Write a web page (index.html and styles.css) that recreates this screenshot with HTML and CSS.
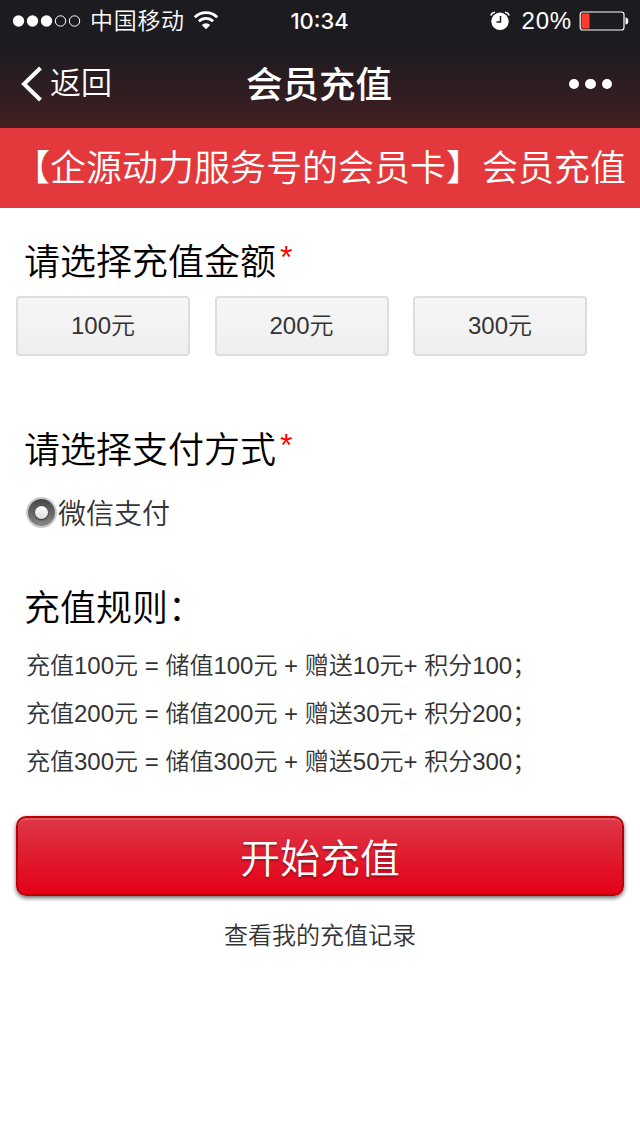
FILE: index.html
```html
<!DOCTYPE html>
<html lang="zh-CN">
<head>
    <meta charset="UTF-8">
    <meta name="viewport" content="width=device-width, initial-scale=1.0">
    <title>会员充值</title>
    <link rel="stylesheet" href="styles.css">
</head>
<body>
    <header class="top">
        <div class="status">
            <div class="status-left">
                <svg class="signal" width="70" height="14" viewBox="0 0 70 14">
                    <g fill="#fff">
                        <circle cx="6.5" cy="7" r="5.7"/>
                        <circle cx="20.5" cy="7" r="5.7"/>
                        <circle cx="34.5" cy="7" r="5.7"/>
                    </g>
                    <g fill="none" stroke="#fff">
                        <circle cx="48.5" cy="7" r="5.2"/>
                        <circle cx="62.5" cy="7" r="5.2"/>
                    </g>
                </svg>
                <span class="carrier">中国移动</span>
                <svg class="wifi" width="26" height="20" viewBox="0 0 26 20">
                    <g fill="none" stroke="#fff" stroke-width="2.8">
                        <path d="M1.8 6.2a15.8 15.8 0 0 1 22.4 0"/>
                        <path d="M5.9 10.3a10 10 0 0 1 14.2 0"/>
                    </g>
                    <path d="M8.8 14a6 6 0 0 1 8.4 0L13 18.2z" fill="#fff"/>
                </svg>
            </div>
            <div class="clock">10:34</div>
            <div class="status-right">
                <svg class="alarm" width="20" height="20" viewBox="0 0 20 20">
                    <circle cx="10" cy="10.3" r="8.7" fill="#fff"/>
                    <path d="M.9 4.5Q1.5 1.5 5 1.2M19.1 4.5Q18.5 1.5 15 1.2" fill="none" stroke="#fff" stroke-width="1.5"/>
                    <path d="M10.5 5v6H6.5" fill="none" stroke="#1c1b20" stroke-width="1.5"/>
                </svg>
                <span class="percent">20%</span>
                <svg class="battery" width="50" height="20" viewBox="0 0 50 20">
                    <rect x="1.2" y="1" width="43.8" height="18" rx="2.5" fill="none" stroke="#fff" stroke-width="1.2"/>
                    <rect x="2.5" y="2.5" width="8" height="15" fill="#ff3b30"/>
                    <path d="M46.5 6.5q2.8 0 2.8 3.5t-2.8 3.5z" fill="#fff"/>
                </svg>
            </div>
        </div>
        <nav class="nav">
            <a class="back">
                <svg width="22" height="36" viewBox="0 0 22 36">
                    <path d="M19.5 2L3 18l16.5 16" fill="none" stroke="#fff" stroke-width="4"/>
                </svg>
                <span>返回</span>
            </a>
            <h1 class="title">会员充值</h1>
            <div class="more"><i></i><i></i><i></i></div>
        </nav>
    </header>

    <div class="banner">【企源动力服务号的会员卡】会员充值</div>

    <main class="content">
        <section class="amount">
            <h2>请选择充值金额<em>*</em></h2>
            <div class="amount-list">
                <button class="amount-btn">100元</button>
                <button class="amount-btn">200元</button>
                <button class="amount-btn">300元</button>
            </div>
        </section>

        <section class="payment">
            <h2>请选择支付方式<em>*</em></h2>
            <label class="pay-type"><span class="radio"></span><span class="pay-name">微信支付</span></label>
        </section>

        <section class="rules">
            <h2>充值规则：</h2>
            <p>充值100元 = 储值100元 + 赠送10元+ 积分100；</p>
            <p>充值200元 = 储值200元 + 赠送30元+ 积分200；</p>
            <p>充值300元 = 储值300元 + 赠送50元+ 积分300；</p>
        </section>

        <button class="submit">开始充值</button>
        <a class="record">查看我的充值记录</a>
    </main>
</body>
</html>
```

FILE: styles.css
```css
* {
    box-sizing: border-box;
}
body {
    margin: 0;
    background: #fff;
    color: #333;
    font-family: "Liberation Sans", "Noto Sans CJK SC", sans-serif;
    font-weight: 350;
}
button {
    font-family: inherit;
    font-weight: inherit;
    padding: 0;
}
svg {
    display: block;
}

/* header */
.top {
    height: 128px;
    color: #fff;
    background: linear-gradient(#1c1b20 0, #1c1b20 45px, #2e1d21 90px, #451f22 128px);
}
.status {
    display: grid;
    grid-template-columns: 1fr auto 1fr;
    align-items: center;
    height: 40px;
    padding: 0 11px 0 12px;
}
.status-left,
.status-right {
    display: flex;
    align-items: center;
}
.status-right {
    justify-content: flex-end;
}
.carrier {
    margin: 0 8px 0 8px;
    font-size: 23px;
    line-height: 40px;
    letter-spacing: 0.7px;
}
.clock {
    padding-right: 2px;
    font-family: Inter, "Liberation Sans", sans-serif;
    font-size: 22px;
    font-weight: 500;
    line-height: 40px;
}
.percent {
    margin: 0 7px 0 12px;
    font-size: 24px;
    line-height: 42px;
    letter-spacing: 0.8px;
}
.nav {
    display: grid;
    grid-template-columns: 1fr auto 1fr;
    align-items: center;
    height: 88px;
    padding: 0 28px 0 21px;
}
.back {
    display: flex;
    align-items: center;
    gap: 7px;
    font-size: 31px;
    line-height: 88px;
}
.title {
    margin: 0;
    padding: 4px 0 0 5px;
    font-size: 36.5px;
    font-weight: 500;
    line-height: 84px;
}
.more {
    display: flex;
    justify-content: flex-end;
    gap: 6px;
}
.more i {
    width: 10.5px;
    height: 10.5px;
    border-radius: 50%;
    background: #fff;
}

.banner {
    height: 80px;
    padding-top: 1px;
    background: #e4393c;
    color: #fff;
    font-size: 36px;
    line-height: 80px;
    text-align: center;
    white-space: nowrap;
}

/* form */
.content {
    display: flex;
    flex-direction: column;
    padding: 33px 16px 0;
}
h2 {
    display: flex;
    margin: 0;
    padding-left: 8px;
    color: #000;
    font-size: 36px;
    font-weight: 350;
    line-height: 44px;
}
h2 em {
    margin-left: 4px;
    color: #f00;
    font-style: normal;
    font-size: 32px;
    font-weight: 400;
    line-height: 32px;
}
.amount-list {
    display: flex;
    gap: 24.5px;
    padding-top: 11px;
}
.amount-btn {
    width: 174px;
    height: 60px;
    padding-bottom: 5px;
    border: 2px solid #ddd;
    border-radius: 4px;
    background: linear-gradient(#f6f6f6, #efefef);
    color: #333;
    font-size: 24px;
}
.payment {
    margin-top: 73px;
}
.pay-type {
    display: flex;
    align-items: center;
    gap: 1px;
    height: 40px;
    margin-top: 19px;
    padding-left: 10px;
    font-size: 28px;
    line-height: 40px;
}
.pay-name {
    padding-top: 5px;
}
.radio {
    display: flex;
    align-items: center;
    justify-content: center;
    width: 31px;
    height: 31px;
    border: 2px solid #ccc;
    border-radius: 50%;
    background: linear-gradient(#444, #888);
}
.radio::after {
    content: "";
    width: 13px;
    height: 13px;
    border-radius: 50%;
    background: linear-gradient(#fff, #ddd);
    box-shadow: 0 1px 2px #222;
}
.rules {
    margin-top: 55px;
}
.rules h2 {
    margin-bottom: 11px;
}
.rules p {
    margin: 0;
    padding-left: 10px;
    font-size: 24px;
    line-height: 48px;
}
.submit {
    height: 80px;
    margin-top: 30px;
    border: 2px solid #b90006;
    border-radius: 10px;
    background: linear-gradient(#dc3848, #e50016);
    box-shadow: inset 0 2px 0 rgba(255, 255, 255, 0.15), 0 2px 4px rgba(0, 0, 0, 0.6);
    color: #fff;
    font-size: 40px;
    text-shadow: 0 2px 2px rgba(0, 0, 0, 0.3);
}
.record {
    margin-top: 20px;
    font-size: 24px;
    line-height: 40px;
    text-align: center;
}
```
